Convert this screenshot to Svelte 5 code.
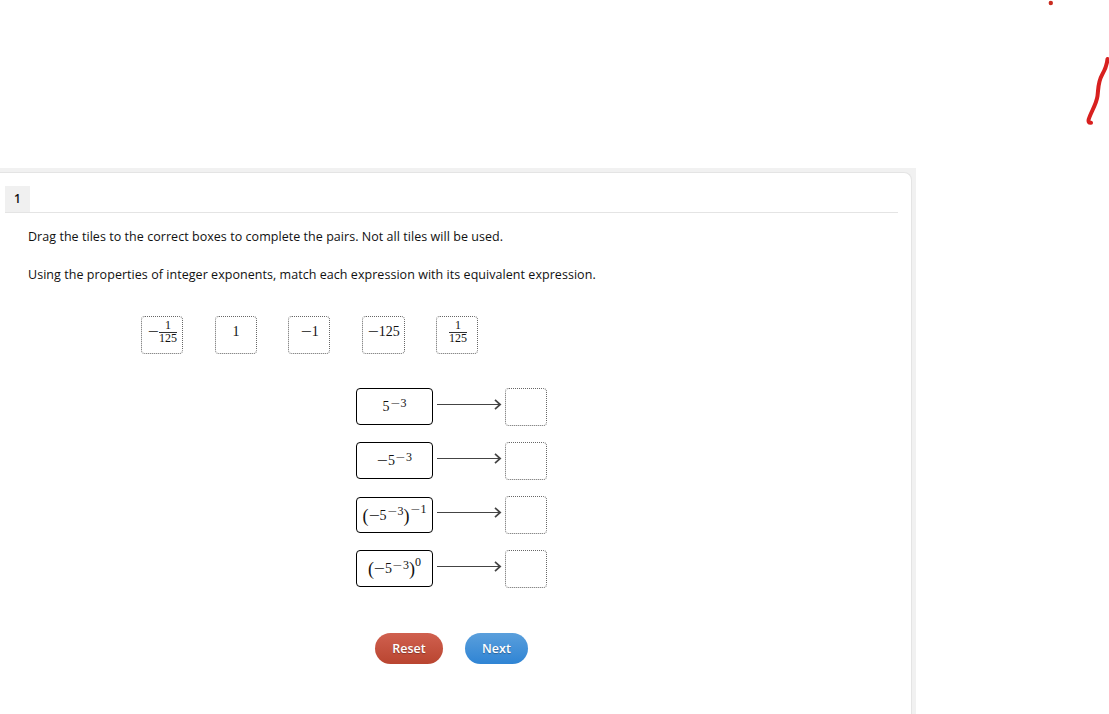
<script>
  const tiles = [
    { sign: true, top: '1', bottom: '125' },
    { value: '1' },
    { sign: true, value: '1' },
    { sign: true, value: '125' },
    { top: '1', bottom: '125' }
  ];

  const pairs = [
    { base: '5', power: '3' },
    { sign: true, base: '5', power: '3' },
    { sign: true, base: '5', power: '3', outerSign: true, outer: '1' },
    { sign: true, base: '5', power: '3', outer: '0' }
  ];
</script>

{#snippet minus()}<span class="minus">−</span>{/snippet}

<div class="page">
  <main class="frame">
    <section class="panel">
      <header>
        <span class="number">1</span>
      </header>

      <p class="directions">Drag the tiles to the correct boxes to complete the pairs. Not all tiles will be used.</p>
      <p class="question">Using the properties of integer exponents, match each expression with its equivalent expression.</p>

      <div class="tiles">
        {#each tiles as tile}
          <div class="tile math" class:wide={tile.value === '125'}>
            {#if tile.sign}{@render minus()}{/if}
            {#if tile.top}
              <span class="fraction">
                <span class="top">{tile.top}</span>
                <span class="bottom">{tile.bottom}</span>
              </span>
            {:else}
              <span>{tile.value}</span>
            {/if}
          </div>
        {/each}
      </div>

      <div class="pairs">
        {#each pairs as pair}
          <div class="pair">
            <div class="expression math" class:long={pair.outerSign}>
              {#if pair.outer}<span class="paren">(</span>{/if}
              {#if pair.sign}{@render minus()}{/if}
              <span>{pair.base}</span>
              <span class="power">{@render minus()}<span>{pair.power}</span></span>
              {#if pair.outer}
                <span class="paren">)</span>
                <span class="power outer">{#if pair.outerSign}{@render minus()}{/if}<span>{pair.outer}</span></span>
              {/if}
            </div>
            <svg class="arrow" width="66" height="12" viewBox="0 0 66 12">
              <path d="M0 6.5H63" stroke="#444" stroke-width="1.2" />
              <path d="M58 1.8L63.2 6.5L58 11.2" fill="none" stroke="#444" stroke-width="1.7" />
            </svg>
            <div class="tile"></div>
          </div>
        {/each}
      </div>

      <div class="actions">
        <button class="reset">Reset</button>
        <button class="next">Next</button>
      </div>
    </section>
  </main>

  <!-- red pen marks over the page -->
  <svg class="ink" width="79" height="135" viewBox="0 0 79 135">
    <circle cx="20.8" cy="3" r="2.2" fill="#c92c20" />
    <path
      d="M77.5 59C77 65 75 70 72 75C68 82 68.5 88 67.5 96C66.5 104 61 112 58.8 119C58 122 59 123 61 122.8"
      fill="none"
      stroke="#d8201f"
      stroke-width="4"
      stroke-linecap="round"
      stroke-linejoin="round"
    />
  </svg>
</div>

<style>
  :global(body) {
    margin: 0;
    background: #fff;
  }

  .page {
    position: relative;
    box-sizing: border-box;
    height: 714px;
    padding-top: 168px;
    overflow: hidden;
    font-family: "Open Sans", sans-serif;
    font-size: 13px;
    color: #111;
  }

  .frame {
    box-sizing: border-box;
    width: 916px;
    height: 546px;
    padding: 4px 4px 0 0;
    background: #f1f1f1;
  }

  .panel {
    box-sizing: border-box;
    height: 542px;
    padding: 13px 13px 0 5px;
    border: solid #e4e4e4;
    border-width: 1px 1px 0 0;
    border-top-right-radius: 8px;
    background: #fff;
  }

  header {
    display: flex;
    height: 26px;
    border-bottom: 1px solid #e4e4e4;
  }

  .number {
    width: 25px;
    height: 26px;
    line-height: 25px;
    text-align: center;
    font-size: 12px;
    font-weight: 600;
    background: #f0f0f0;
  }

  p {
    margin: 0 0 0 23px;
    line-height: 18px;
    font-size: 12.5px;
    letter-spacing: 0.046px;
    white-space: nowrap;
  }

  .directions {
    margin-top: 15px;
  }

  .question {
    margin-top: 20px;
  }

  .tiles {
    display: flex;
    gap: 31.6px;
    margin: 32px 0 0 136px;
  }

  .tile {
    box-sizing: border-box;
    width: 42px;
    height: 38px;
    border: 1px dotted #666;
    border-radius: 4px;
  }

  .wide {
    width: 43px;
  }

  .math {
    display: flex;
    align-items: center;
    justify-content: center;
    font-family: "Liberation Serif", serif;
    font-size: 14px;
    line-height: 14px;
    white-space: nowrap;
  }

  .tiles .math {
    padding: 0 0 6px 1px;
  }

  .minus {
    width: 11px;
    text-align: center;
    transform: scaleX(1.4);
  }

  .fraction {
    display: flex;
    flex-direction: column;
    align-items: center;
    font-size: 12px;
    line-height: 11px;
  }

  .top {
    width: 18px;
    padding-bottom: 1px;
    text-align: center;
    border-bottom: 1px solid #333;
  }

  .pairs {
    display: flex;
    flex-direction: column;
    gap: 16px;
    margin: 34px 0 0 351px;
  }

  .pair {
    display: flex;
    height: 38px;
  }

  .expression {
    box-sizing: border-box;
    width: 77px;
    height: 37px;
    padding-top: 1px;
    border: 1px solid #000;
    border-radius: 4px;
  }

  .expression.long {
    height: 36px;
    margin-top: 1px;
  }

  .power {
    display: flex;
    padding-bottom: 9px;
    font-size: 12px;
  }

  .outer {
    padding-bottom: 14px;
  }

  .paren {
    font-size: 18px;
  }

  .arrow {
    margin: 10px 2px 0 4px;
  }

  .actions {
    display: flex;
    gap: 22px;
    margin: 45px 0 0 370px;
  }

  button {
    height: 31px;
    padding: 0 0 1px;
    border: 0;
    border-radius: 16px;
    font: 600 12.5px "Open Sans", sans-serif;
    color: #fff;
    text-shadow: 0 1px 1px rgba(0, 0, 0, 0.3);
  }

  .reset {
    width: 68px;
    background: linear-gradient(#d0604f, #b94530);
  }

  .next {
    width: 63px;
    background: linear-gradient(#5a9fdc, #2f84d4);
  }

  .ink {
    position: absolute;
    top: 0;
    right: 0;
  }
</style>
